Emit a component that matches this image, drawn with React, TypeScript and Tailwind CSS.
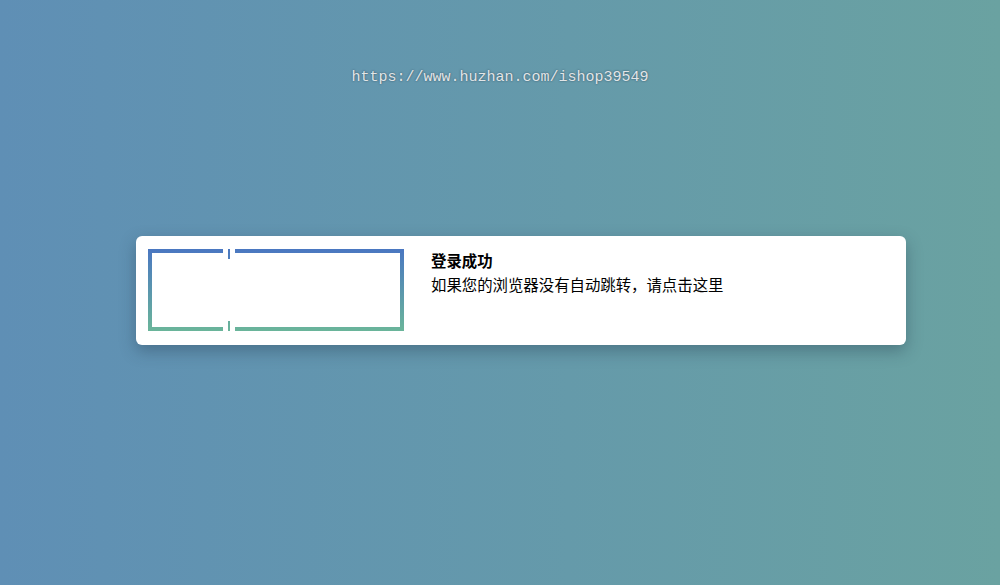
import React from "react";

function Frame() {
  return (
    <svg width="256" height="82" viewBox="0 0 256 82" className="shrink-0">
      <defs>
        <linearGradient id="fg" gradientUnits="userSpaceOnUse" x1="0" y1="0" x2="0" y2="82">
          <stop offset="0" stopColor="#4a77c1" />
          <stop offset="1" stopColor="#6ab59a" />
        </linearGradient>
      </defs>
      <g fill="url(#fg)">
        {/* left + right edges */}
        <rect x="0" y="0" width="4" height="82" />
        <rect x="252" y="0" width="4" height="82" />
        {/* top, split */}
        <rect x="0" y="0" width="75" height="4" />
        <rect x="87" y="0" width="169" height="4" />
        {/* bottom, split */}
        <rect x="0" y="78" width="75" height="4" />
        <rect x="87" y="78" width="169" height="4" />
        {/* ticks */}
        <rect x="80" y="0" width="2" height="10" />
        <rect x="80" y="72" width="2" height="10" />
      </g>
    </svg>
  );
}

export default function App() {
  return (
    <div className="relative h-[585px] w-[1000px] overflow-hidden bg-gradient-to-r from-[#5f8fb5] to-[#6aa2a1]">
      <div
        className="absolute left-0 right-0 top-[68px] text-center text-[15px] leading-[20px] text-[#e2e6e8] [text-shadow:0_0_2px_#2f4a5c]"
        style={{ fontFamily: '"Liberation Mono", "DejaVu Sans Mono", monospace' }}
      >
        https://www.huzhan.com/ishop39549
      </div>
      <div className="pt-[236px] pl-[136px]">
        <div className="flex h-[109px] w-[770px] items-start rounded-[6px] bg-white px-[12px] pt-[13px] shadow-[0_6px_16px_rgba(30,50,70,0.35)]">
          <Frame />
          <div
            className="ml-[27px] text-black"
            style={{ fontFamily: '"Noto Sans CJK SC", "Noto Sans", sans-serif' }}
          >
            <div className="text-[15.4px] font-bold leading-[22px]">登录成功</div>
            <div className="mt-[2px] text-[15.4px] leading-[22px]">如果您的浏览器没有自动跳转，请点击这里</div>
          </div>
        </div>
      </div>
    </div>
  );
}
